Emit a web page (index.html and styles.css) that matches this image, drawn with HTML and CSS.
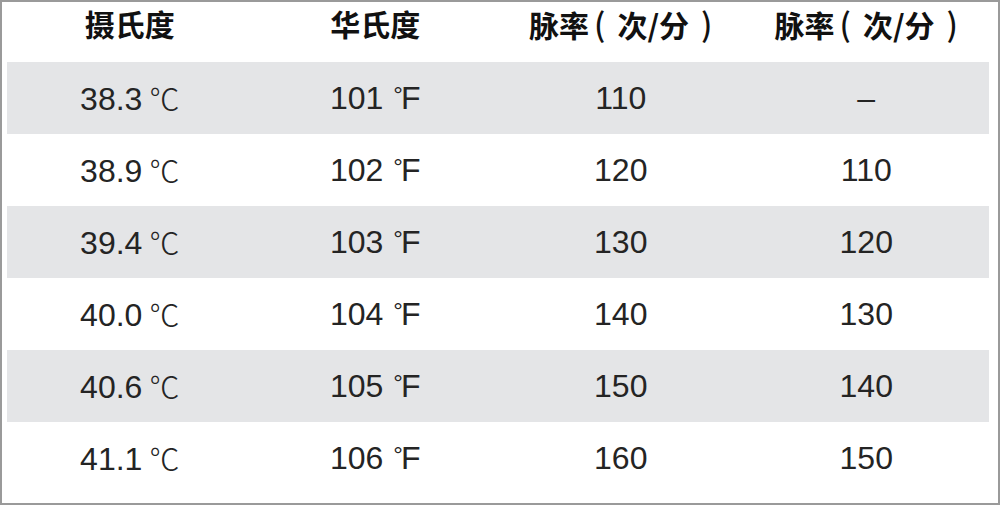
FILE: index.html
```html
<!DOCTYPE html>
<html lang="zh">
<head>
<meta charset="utf-8">
<link rel="stylesheet" href="styles.css">
</head>
<body>
<div class="frame">
  <div class="table">
    <div class="row head">
      <div class="cell">摄氏度</div>
      <div class="cell">华氏度</div>
      <div class="cell">脉率<span class="po">(</span>次/分<span class="pc">)</span></div>
      <div class="cell">脉率<span class="po">(</span>次/分<span class="pc">)</span></div>
    </div>
    <div class="row shade">
      <div class="cell">38.3<span class="c">℃</span></div>
      <div class="cell">101<span class="f"><span class="deg">°</span>F</span></div>
      <div class="cell">110</div>
      <div class="cell">–</div>
    </div>
    <div class="row">
      <div class="cell">38.9<span class="c">℃</span></div>
      <div class="cell">102<span class="f"><span class="deg">°</span>F</span></div>
      <div class="cell">120</div>
      <div class="cell">110</div>
    </div>
    <div class="row shade">
      <div class="cell">39.4<span class="c">℃</span></div>
      <div class="cell">103<span class="f"><span class="deg">°</span>F</span></div>
      <div class="cell">130</div>
      <div class="cell">120</div>
    </div>
    <div class="row">
      <div class="cell">40.0<span class="c">℃</span></div>
      <div class="cell">104<span class="f"><span class="deg">°</span>F</span></div>
      <div class="cell">140</div>
      <div class="cell">130</div>
    </div>
    <div class="row shade">
      <div class="cell">40.6<span class="c">℃</span></div>
      <div class="cell">105<span class="f"><span class="deg">°</span>F</span></div>
      <div class="cell">150</div>
      <div class="cell">140</div>
    </div>
    <div class="row">
      <div class="cell">41.1<span class="c">℃</span></div>
      <div class="cell">106<span class="f"><span class="deg">°</span>F</span></div>
      <div class="cell">160</div>
      <div class="cell">150</div>
    </div>
  </div>
</div>
</body>
</html>
```
FILE: styles.css
```css
html, body {
  margin: 0;
  padding: 0;
  background: #ffffff;
}
.frame {
  box-sizing: border-box;
  width: 1000px;
  height: 505px;
  border: 2px solid #9a9a9a;
  padding: 0 9px 9px 5px;
  background: #ffffff;
}
.table {
  display: flex;
  flex-direction: column;
}
.row {
  display: grid;
  grid-template-columns: repeat(4, 1fr);
  height: 72px;
  align-items: center;
}
.row.head {
  height: 60px;
}
.row.shade {
  background: #e4e5e7;
}
.cell {
  text-align: center;
  font-family: "Liberation Sans", "Noto Sans CJK SC", sans-serif;
  font-size: 32px;
  color: #242424;
  line-height: 1;
  white-space: nowrap;
}
.head .cell {
  font-family: "Noto Sans CJK SC", sans-serif;
  font-weight: 700;
  font-size: 30px;
  color: #111111;
  line-height: 1;
  padding-bottom: 18px;
}
.po,
.pc {
  font-size: 32px;
  font-weight: 500;
}
.po {
  margin: 0 12px 0 5px;
}
.pc {
  margin-left: 12px;
}
.c {
  font-family: "Noto Sans CJK SC", sans-serif;
  font-size: 30px;
  font-weight: 300;
  margin-left: 7px;
}
.f {
  margin-left: 10px;
}
.deg {
  font-size: 24px;
  vertical-align: 6px;
  margin-right: -2px;
}
```
